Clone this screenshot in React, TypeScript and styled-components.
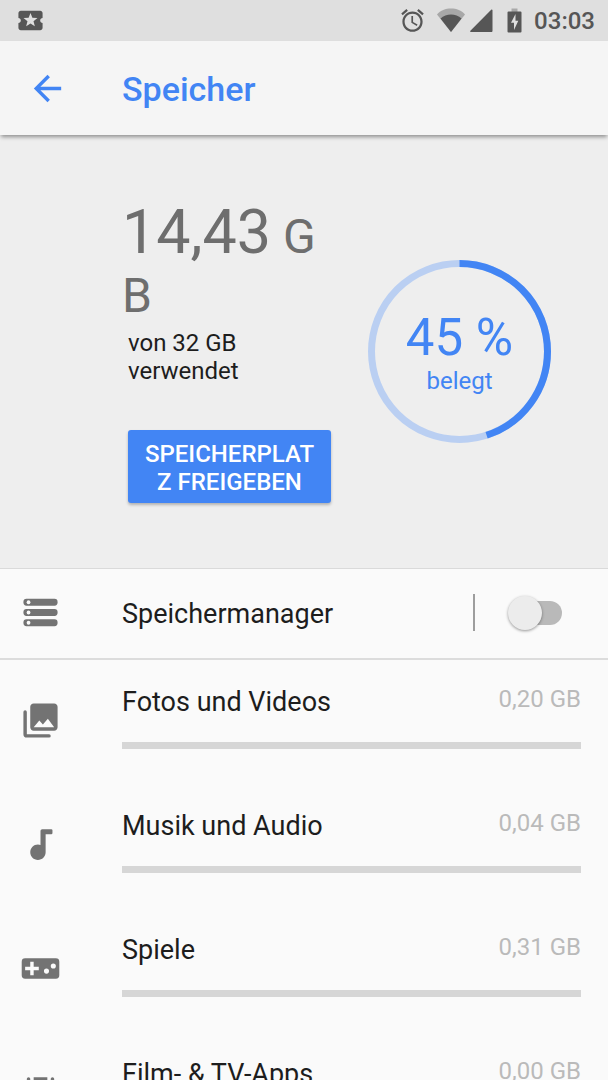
import React, { useState } from 'react';
import styled, { createGlobalStyle } from 'styled-components';

const GlobalStyle = createGlobalStyle`
  * { box-sizing: border-box; }
  body {
    margin: 0;
    background: #fafafa;
    color: #1d1d1d;
    font-family: Roboto, "Noto Sans", sans-serif;
  }
`;

const Screen = styled.div`
  display: flex;
  flex-direction: column;
  height: 100vh;
  overflow: hidden;
`;

const StatusBar = styled.div`
  display: flex;
  flex: none;
  align-items: center;
  justify-content: space-between;
  height: 41px;
  padding: 0 13px 0 16px;
  background: #dfdfdf;
  color: #565656;
  svg { display: block; fill: currentColor; }
`;

const StatusIcons = styled.div`
  display: flex;
  align-items: center;
`;

const SignalIcons = styled.div`
  display: flex;
  gap: 4px;
  margin: 0 14px 0 10px;
`;

const Clock = styled.time`
  margin-left: 12px;
  padding-top: 1px;
  font-size: 24px;
  font-weight: 500;
  line-height: 28px;
`;

const AppBar = styled.header`
  position: relative;
  display: flex;
  flex: none;
  align-items: center;
  gap: 54px;
  height: 94px;
  padding: 0 27px;
  background: #f5f5f5;
  color: #4285f4;
  box-shadow: 0 3px 4px -1px rgba(0, 0, 0, 0.4);
  z-index: 1;
`;

const BackButton = styled.button`
  padding: 0;
  border: 0;
  background: none;
  color: inherit;
  svg { display: block; fill: currentColor; }
`;

const Title = styled.h1`
  margin: 0;
  padding-top: 2px;
  font-size: 34px;
  font-weight: 500;
  line-height: 40px;
`;

const Content = styled.main`
  flex: 1;
  overflow-y: auto;
  scrollbar-width: none;
`;

const Summary = styled.section`
  display: grid;
  grid-template-columns: 215fr 245fr;
  align-items: center;
  min-height: 434px;
  padding: 0 26px 0 122px;
  border-bottom: 1px solid #dadada;
  background: #eeeeee;
`;

const Usage = styled.div`
  display: flex;
  flex-direction: column;
  padding-bottom: 4px;
`;

const Amount = styled.div`
  color: #6e6e6e;
  font-size: 48px;
  line-height: 56px;
  word-break: break-all;
`;

const AmountNumber = styled.span`
  font-size: 61px;
  line-height: 72px;
`;

const AmountNote = styled.p`
  margin: 5px 6px 0;
  font-size: 24px;
  line-height: 28px;
`;

const FreeButton = styled.button`
  margin: 45px 6px 0;
  padding: 10px 14px 7px;
  border: 0;
  border-radius: 3px;
  background: #4285f4;
  box-shadow: 0 2px 3px rgba(0, 0, 0, 0.25);
  color: #ffffff;
  font-family: inherit;
  font-size: 24px;
  font-weight: 500;
  line-height: 28px;
  text-transform: uppercase;
  word-break: break-all;
`;

const Gauge = styled.div`
  display: grid;
  place-items: center;
  color: #4285f4;
  text-align: center;
  > * { grid-area: 1 / 1; }
`;

const GaugePercent = styled.div`
  font-size: 51px;
  line-height: 59px;
`;

const GaugeCaption = styled.div`
  font-size: 24px;
  line-height: 28px;
`;

const Row = styled.div`
  display: grid;
  grid-template-columns: 102px 1fr auto;
  align-items: center;
  min-height: 91px;
  padding: 0 46px 2px 20px;
  border-bottom: 2px solid #dcdcdc;
`;

const RowIcon = styled.svg`
  display: block;
  width: 41px;
  height: 41px;
  fill: #737373;
`;

const RowLabel = styled.label`
  padding-top: 2px;
  font-size: 27px;
  line-height: 34px;
`;

const SwitchArea = styled.div`
  display: flex;
  align-items: center;
  height: 37px;
  border-left: 2px solid #9d9d9d;
  padding-left: 36px;
`;

const Switch = styled.input`
  position: relative;
  appearance: none;
  width: 51px;
  height: 24px;
  margin: 0;
  border-radius: 12px;
  background: #b9b9b9;
  &::before {
    content: "";
    position: absolute;
    top: -5px;
    left: -3px;
    width: 34px;
    height: 34px;
    border-radius: 50%;
    background: #ececec;
    box-shadow: 0 1px 3px rgba(0, 0, 0, 0.4);
  }
  &:checked { background: #a1c2fa; }
  &:checked::before { left: 20px; background: #4285f4; }
`;

const CategoryList = styled.ul`
  margin: 0;
  padding: 0;
  list-style: none;
`;

const Category = styled.li`
  display: grid;
  grid-template-columns: 102px 1fr;
  min-height: 124px;
  padding: 25px 27px 29px 20px;
  > svg { align-self: center; }
`;

const CategoryHead = styled.div`
  display: flex;
  align-items: flex-start;
  justify-content: space-between;
`;

const CategoryName = styled.span`
  font-size: 27px;
  line-height: 34px;
`;

const CategorySize = styled.span`
  color: #bababa;
  font-size: 24px;
  line-height: 28px;
`;

const Track = styled.div`
  height: 7px;
  margin-top: 23px;
  background: #d6d6d6;
`;

const PhotosIcon = () => (
  <RowIcon viewBox="0 0 24 24" aria-hidden>
    <path d="M22 16V4c0-1.100-.9-2-2-2H8c-1.100 0-2 .9-2 2v12c0 1.100.9 2 2 2h12c1.100 0 2-.9 2-2zM8 16l3.300-4 2.100 2.300 2.900-3.300L20 16z" />
    <path d="M3 7v13a1 1 0 0 0 1 1h13" fill="none" stroke="#737373" strokeWidth="2" strokeLinecap="round" />
  </RowIcon>
);

const MusicIcon = () => (
  <RowIcon viewBox="0 0 24 24" aria-hidden>
    <path d="M13 3a1 1 0 0 0-1 1v8.280c-.47-.17-.97-.28-1.500-.28C8.010 12 6 14.010 6 16.500S8.010 21 10.500 21s4.500-2 4.500-4.500V6h3.300a.7.7 0 0 0 .7-.7V3.700a.7.7 0 0 0-.7-.7z" />
  </RowIcon>
);

const GamesIcon = () => (
  <RowIcon viewBox="0 0 24 24" aria-hidden>
    <path
      fillRule="evenodd"
      d="M3 6h18a2 2 0 0 1 2 2v8a2 2 0 0 1-2 2H3a2 2 0 0 1-2-2V8a2 2 0 0 1 2-2zM6 8v3H3v2h3v3h2v-3h3v-2H8V8zM15.500 12a1.500 1.500 0 1 0 0 3 1.500 1.500 0 0 0 0-3zM19.500 9a1.500 1.500 0 1 0 0 3 1.500 1.500 0 0 0 0-3z"
    />
  </RowIcon>
);

const MoviesIcon = () => (
  <RowIcon viewBox="0 0 24 24" aria-hidden>
    <path d="M19 3a1 1 0 0 0-1 1v1h-2V3H8v2H6V4a1 1 0 0 0-2 0v16a1 1 0 0 0 2 0v-1h2v2h8v-2h2v1a1 1 0 0 0 2 0V4a1 1 0 0 0-1-1zM8 17H6v-2h2v2zm0-4H6v-2h2v2zm0-4H6V7h2v2zm10 8h-2v-2h2v2zm0-4h-2v-2h2v2zm0-4h-2V7h2v2z" />
  </RowIcon>
);

const categories = [
  { name: 'Fotos und Videos', size: '0,20 GB', Icon: PhotosIcon },
  { name: 'Musik und Audio', size: '0,04 GB', Icon: MusicIcon },
  { name: 'Spiele', size: '0,31 GB', Icon: GamesIcon },
  { name: 'Film- & TV-Apps', size: '0,00 GB', Icon: MoviesIcon },
];

export default function App() {
  const [managed, setManaged] = useState(false);

  return (
    <Screen>
      <GlobalStyle />
      <StatusBar>
        <svg width="29" height="29" viewBox="0 0 24 24" aria-hidden>
          <path d="M20 12c0-1.100.9-2 2-2V6c0-1.100-.9-2-2-2H4c-1.100 0-1.990.9-1.990 2v4c1.100 0 1.990.9 1.990 2s-.89 2-2 2v4c0 1.100.9 2 2 2h16c1.100 0 2-.9 2-2v-4c-1.100 0-2-.9-2-2zm-4.420 4.800L12 14.500l-3.580 2.300 1.080-4.120-3.290-2.690 4.240-.25L12 5.800l1.540 3.950 4.240.25-3.290 2.690 1.090 4.110z" />
        </svg>
        <StatusIcons>
          <svg width="27" height="27" viewBox="0 0 24 24" aria-hidden>
            <path d="M22 5.720l-4.600-3.860-1.290 1.530 4.600 3.860L22 5.720zM7.880 3.390L6.600 1.860 2 5.710l1.290 1.530 4.590-3.850zM12.500 8H11v6l4.750 2.850.75-1.230-4-2.370V8zM12 4c-4.970 0-9 4.030-9 9s4.020 9 9 9c4.970 0 9-4.030 9-9s-4.030-9-9-9zm0 16c-3.870 0-7-3.130-7-7s3.130-7 7-7 7 3.130 7 7-3.130 7-7 7z" />
          </svg>
          <SignalIcons>
            <svg width="30" height="25" viewBox="0 0 30 25" aria-hidden>
              <path fill="#a8a8a8" d="M15 24L1 6.500C4.500 2.200 9.500.5 15 .5s10.500 1.700 14 6z" />
              <path d="M15 24L4.500 10.500C7.500 7.700 11 6.500 15 6.500s7.500 1.200 10.500 4z" />
            </svg>
            <svg width="23" height="25" viewBox="0 0 23 25" aria-hidden>
              <path d="M21.200 1.800c.6-.6 1.300-.3 1.300.5v20.500c0 .8-.4 1.200-1.200 1.200H1c-1 0-1.200-.7-.6-1.300z" />
            </svg>
          </SignalIcons>
          <svg width="15" height="25" viewBox="0 0 15 25" aria-hidden>
            <path fill="#a8a8a8" d="M4.500.5h6v4h-6z" />
            <path fillRule="evenodd" d="M1.500 3.500h12q1 0 1 1V23.500q0 1-1 1h-12q-1 0-1-1V4.500q0-1 1-1zM8.500 6L4 14.800h3V22l4.300-9.300H8.500z" />
          </svg>
          <Clock>03:03</Clock>
        </StatusIcons>
      </StatusBar>

      <AppBar>
        <BackButton type="button" aria-label="Zurück">
          <svg width="41" height="41" viewBox="0 0 24 24" aria-hidden>
            <path d="M20 11H7.830l5.590-5.590L12 4l-8 8 8 8 1.410-1.410L7.830 13H20v-2z" />
          </svg>
        </BackButton>
        <Title>Speicher</Title>
      </AppBar>

      <Content>
        <Summary>
          <Usage>
            <Amount>
              <AmountNumber>14,43</AmountNumber> GB
            </Amount>
            <AmountNote>von 32 GB verwendet</AmountNote>
            <FreeButton type="button">Speicherplatz freigeben</FreeButton>
          </Usage>
          <Gauge>
            <svg width="183" height="183" viewBox="0 0 183 183" fill="none" strokeWidth="7" aria-hidden>
              <circle cx="91.500" cy="91.500" r="88" stroke="#bacff2" />
              <circle
                cx="91.500"
                cy="91.500"
                r="88"
                stroke="#4285f4"
                pathLength="100"
                strokeDasharray="45 55"
                transform="rotate(-90 91.500 91.500)"
              />
            </svg>
            <div>
              <GaugePercent>45 %</GaugePercent>
              <GaugeCaption>belegt</GaugeCaption>
            </div>
          </Gauge>
        </Summary>

        <Row>
          <RowIcon viewBox="0 0 24 24" aria-hidden>
            {[4, 10, 16].map((y) => (
              <g key={y}>
                <rect x="2" y={y} width="20" height="4" rx="1.800" />
                <circle cx="5" cy={y + 2} r="1.100" fill="#fafafa" />
              </g>
            ))}
          </RowIcon>
          <RowLabel htmlFor="manager">Speichermanager</RowLabel>
          <SwitchArea>
            <Switch
              id="manager"
              type="checkbox"
              role="switch"
              checked={managed}
              onChange={(e) => setManaged(e.target.checked)}
            />
          </SwitchArea>
        </Row>

        <CategoryList>
          {categories.map(({ name, size, Icon }) => (
            <Category key={name}>
              <Icon />
              <div>
                <CategoryHead>
                  <CategoryName>{name}</CategoryName>
                  <CategorySize>{size}</CategorySize>
                </CategoryHead>
                <Track />
              </div>
            </Category>
          ))}
        </CategoryList>
      </Content>
    </Screen>
  );
}
